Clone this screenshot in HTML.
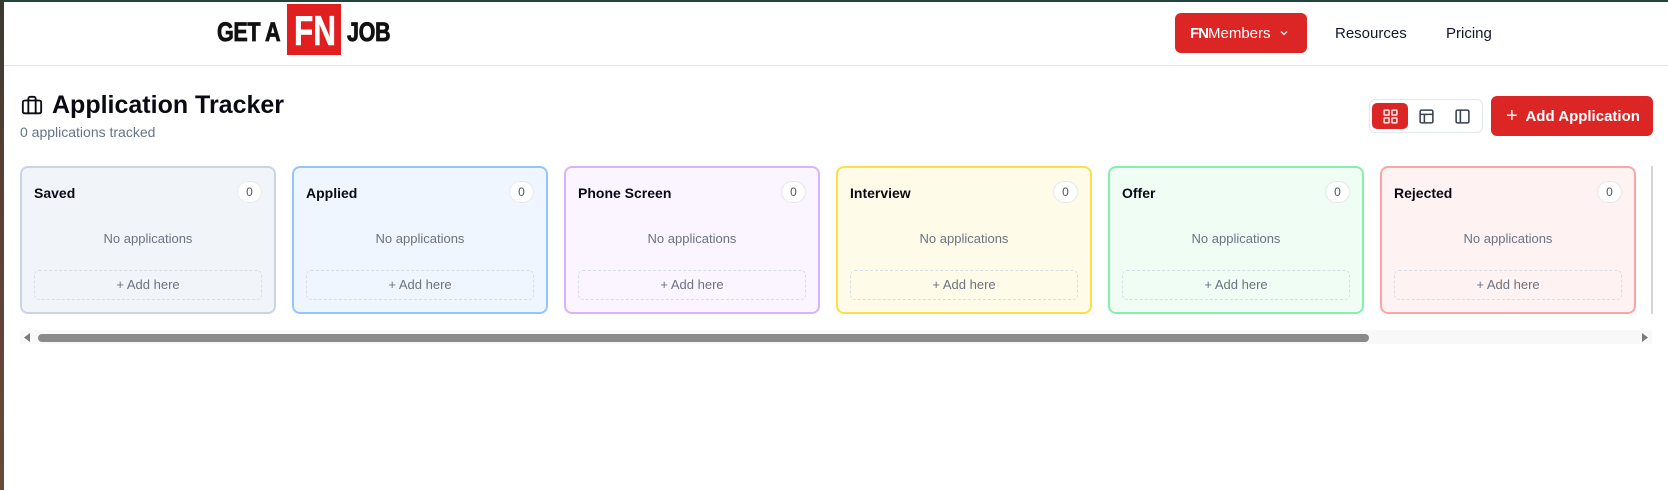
<!DOCTYPE html>
<html><head><meta charset="utf-8"><style>
*{box-sizing:border-box;margin:0;padding:0}
html,body{width:1668px;height:490px;overflow:hidden;background:#fff;font-family:"Liberation Sans",sans-serif;color:#0f172a}
.topline{position:absolute;left:0;top:0;width:1668px;height:2px;background:#23443c}
.leftstrip{position:absolute;left:0;top:0;width:4px;height:490px;background:linear-gradient(#3a3a30,#5a4032 40%,#6a4a3a)}
.hdr{position:absolute;left:4px;top:2px;width:1664px;height:64px;border-bottom:1px solid #e5e7eb}
.logo{position:absolute;top:18px;height:28px;line-height:28px;font-weight:bold;font-size:27px;letter-spacing:-0.5px;color:#111;transform-origin:left center;transform:scaleX(0.8);white-space:nowrap;-webkit-text-stroke:0.8px #111}
.fn{position:absolute;left:287px;top:4px;width:54px;height:51px;background:#e02020;color:#fff;font-weight:bold;font-size:42px;text-align:center;line-height:53px;overflow:hidden}
.fn span{display:inline-block;transform:scaleX(0.75);-webkit-text-stroke:0.6px #fff}
.abs{position:absolute}
.mem{left:1175px;top:13px;width:132px;height:40px;background:#dc2626;border-radius:6px;color:#fff;font-size:15px;line-height:42px;padding-left:15px}
.nav{top:25px;font-size:15px;color:#111827}
.title{left:52px;top:91px;font-size:25px;font-weight:bold;color:#0a0a14}
.sub{left:20px;top:124px;font-size:14px;color:#64748b}
.grp{left:1369px;top:99px;width:114px;height:34px;border:1px solid #e2e8f0;border-radius:6px}
.seg{position:absolute;top:3px;width:36px;height:26px;border-radius:5px;display:flex;align-items:center;justify-content:center}
.add{left:1491px;top:96px;width:162px;height:40px;background:#dc2626;border-radius:6px;color:#fff;font-size:15px;font-weight:bold;line-height:40px;padding-left:15px}
.card{position:absolute;top:166px;width:256px;height:148px;border:2px solid;border-radius:8px}
.card h3{position:absolute;left:12px;top:17px;font-size:14px;font-weight:bold;color:#0a0a14}
.badge{position:absolute;right:12px;top:13px;width:25px;height:22px;border-radius:11px;background:#fff;border:1px solid #e5e7eb;font-size:12px;color:#4b5563;text-align:center;line-height:20px}
.empty{position:absolute;left:0;right:0;top:63px;text-align:center;font-size:13px;color:#6b7280}
.ah{position:absolute;left:12px;right:12px;top:102px;height:30px;border:1px dashed #d6dde6;border-radius:5px;text-align:center;font-size:13px;color:#6b7280;line-height:28px}
.track{left:20px;top:330px;width:1632px;height:14px;background:#f8f8f8}
.thumb{left:38px;top:334px;width:1331px;height:8px;background:#8a8a8a;border-radius:4px}
</style></head><body>
<div class="topline"></div><div class="leftstrip"></div>
<div class="hdr"></div>
<div class="logo" style="left:217px">GET A</div>
<div class="fn"><span>FN</span></div>
<div class="logo" style="left:347px">JOB</div>
<div class="abs mem"><b style="letter-spacing:-1px">FN</b>Members <svg width="12" height="12" viewBox="0 0 24 24" style="vertical-align:-1px;margin-left:3px" fill="none" stroke="#fff" stroke-width="2.5"><path d="M6 9l6 6 6-6"/></svg></div>
<div class="abs nav" style="left:1335px">Resources</div>
<div class="abs nav" style="left:1446px">Pricing</div>
<svg class="abs" style="left:20px;top:95px" width="24" height="22" viewBox="0 0 24 24" fill="none" stroke="#0a0a14" stroke-width="2" stroke-linecap="round" stroke-linejoin="round"><path d="M16 20V4a2 2 0 0 0-2-2h-4a2 2 0 0 0-2 2v16"/><rect width="20" height="14" x="2" y="6" rx="2"/></svg>
<div class="abs title">Application Tracker</div>
<div class="abs sub">0 applications tracked</div>
<div class="abs grp">
<div class="seg" style="left:2px;background:#dc2626"><svg width="17" height="17" viewBox="0 0 24 24" fill="none" stroke="#fde2e2" stroke-width="2.2"><rect x="3" y="3" width="7" height="7" rx="1"/><rect x="14" y="3" width="7" height="7" rx="1"/><rect x="3" y="14" width="7" height="7" rx="1"/><rect x="14" y="14" width="7" height="7" rx="1"/></svg></div>
<div class="seg" style="left:38px"><svg width="17" height="17" viewBox="0 0 24 24" fill="none" stroke="#374151" stroke-width="2.2"><rect x="3" y="3" width="18" height="18" rx="2"/><path d="M3 9h18M9 9v12"/></svg></div>
<div class="seg" style="left:74px"><svg width="17" height="17" viewBox="0 0 24 24" fill="none" stroke="#374151" stroke-width="2.2"><rect x="3" y="3" width="18" height="18" rx="2"/><path d="M9 3v18"/></svg></div>
</div>
<div class="abs add"><span style="font-weight:normal;font-size:20px;vertical-align:-1px">+</span>&nbsp; Add Application</div>

<div class="card" style="left:20px;background:#f1f5f9;border-color:#cbd5e1"><h3>Saved</h3><div class="badge">0</div><div class="empty">No applications</div><div class="ah">+ Add here</div></div>
<div class="card" style="left:292px;background:#eff6ff;border-color:#93c5fd"><h3>Applied</h3><div class="badge">0</div><div class="empty">No applications</div><div class="ah">+ Add here</div></div>
<div class="card" style="left:564px;background:#faf5ff;border-color:#d8b4fe"><h3>Phone Screen</h3><div class="badge">0</div><div class="empty">No applications</div><div class="ah">+ Add here</div></div>
<div class="card" style="left:836px;background:#fefce8;border-color:#fde047"><h3>Interview</h3><div class="badge">0</div><div class="empty">No applications</div><div class="ah">+ Add here</div></div>
<div class="card" style="left:1108px;background:#f0fdf4;border-color:#86efac"><h3>Offer</h3><div class="badge">0</div><div class="empty">No applications</div><div class="ah">+ Add here</div></div>
<div class="card" style="left:1380px;background:#fef2f2;border-color:#fca5a5"><h3>Rejected</h3><div class="badge">0</div><div class="empty">No applications</div><div class="ah">+ Add here</div></div>
<div class="abs" style="left:1651px;top:166px;width:2px;height:148px;background:#d1d5db"></div>

<div class="abs track"></div>
<div class="abs thumb"></div>
<svg class="abs" style="left:23px;top:333px" width="8" height="9"><path d="M7 0L1 4.5 7 9z" fill="#7a7a7a"/></svg>
<svg class="abs" style="left:1641px;top:333px" width="8" height="9"><path d="M1 0L7 4.5 1 9z" fill="#7a7a7a"/></svg>
</body></html>
